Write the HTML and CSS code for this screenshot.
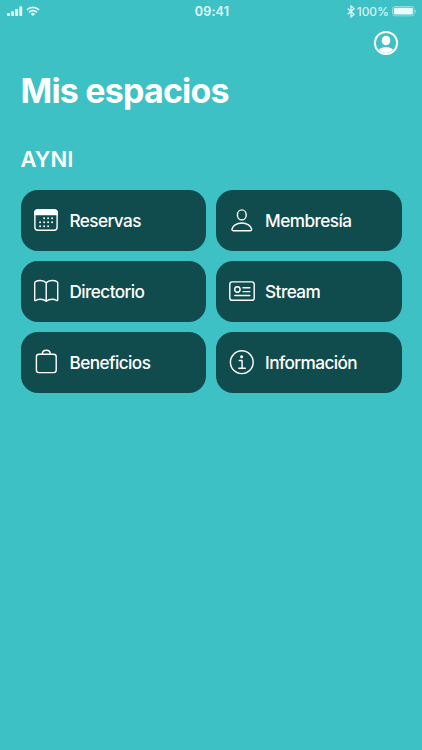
FILE: index.html
```html
<!DOCTYPE html>
<html lang="es">
<head>
    <meta charset="UTF-8">
    <meta name="viewport" content="width=device-width, initial-scale=1.0">
    <title>Mis espacios</title>
    <link rel="stylesheet" href="styles.css">
</head>
<body>
    <div class="status-bar">
        <div class="status-left">
            <svg class="signal" width="16" height="11" viewBox="0 0 16 11" fill="currentColor">
                <rect x="0" y="7" width="2.9" height="3" rx="0.7"/>
                <rect x="4.1" y="5.3" width="2.9" height="4.7" rx="0.7"/>
                <rect x="8.2" y="2.9" width="2.9" height="7.1" rx="0.7"/>
                <rect x="12.3" y="0.2" width="2.9" height="9.8" rx="0.7"/>
            </svg>
            <svg class="wifi" width="14" height="11" viewBox="0 0 14 11" fill="none" stroke="currentColor" stroke-width="1.7">
                <path d="M0.9 3.9a8.6 8.6 0 0 1 12.2 0"/>
                <path d="M3.1 6.3a5.5 5.5 0 0 1 7.8 0"/>
                <path d="M7 10.1L4.8 7.9a3.1 3.1 0 0 1 4.4 0z" fill="currentColor" stroke="none"/>
            </svg>
        </div>
        <div class="status-time">09:41</div>
        <div class="status-right">
            <svg class="bluetooth" width="8" height="13" viewBox="0 0 8 13" fill="none" stroke="currentColor" stroke-width="1.2">
                <path d="M0.7 3.5l6.4 5.7-3.1 2.8V0.9l3.1 2.8-6.4 5.6"/>
            </svg>
            <span class="battery-level">100%</span>
            <svg class="battery" width="25" height="11" viewBox="0 0 25 11">
                <rect x="0.5" y="0.5" width="21.6" height="9.4" rx="2.4" fill="none" stroke="currentColor" stroke-width="0.8" opacity="0.6"/>
                <rect x="1.8" y="1.8" width="19" height="6.8" rx="1.3" fill="currentColor"/>
                <path d="M23.1 3.5c1.2 0.5 1.2 2.9 0 3.4z" fill="currentColor" opacity="0.6"/>
            </svg>
        </div>
    </div>

    <header class="toolbar">
        <button class="profile-button" aria-label="Perfil">
            <svg width="26" height="26" viewBox="0 0 26 26">
                <defs>
                    <clipPath id="avatar-clip"><circle cx="13" cy="13" r="10"/></clipPath>
                </defs>
                <circle cx="13" cy="13" r="11.1" fill="none" stroke="currentColor" stroke-width="2"/>
                <g clip-path="url(#avatar-clip)" fill="currentColor">
                    <ellipse cx="13" cy="10.5" rx="4.3" ry="4.8"/>
                    <ellipse cx="13" cy="22.3" rx="8.2" ry="5.4"/>
                </g>
            </svg>
        </button>
    </header>

    <main class="content">
        <h1>Mis espacios</h1>
        <h2>AYNI</h2>
        <div class="spaces">
            <button class="space-card">
                <svg class="space-icon" viewBox="0 0 28 28">
                    <rect x="2.9" y="4" width="22.2" height="20.2" rx="3"/>
                    <path class="solid" d="M2.2 9.2V6.5A3.2 3.2 0 0 1 5.4 3.3h17.2a3.2 3.2 0 0 1 3.2 3.2v2.7z"/>
                    <path class="dots" d="M12.1 12.2h8.1M8.1 16.2h12.1M8.1 20.2h8.1"/>
                </svg>
                <span>Reservas</span>
            </button>
            <button class="space-card">
                <svg class="space-icon" viewBox="0 0 28 28">
                    <ellipse cx="13.8" cy="8.9" rx="4.4" ry="5"/>
                    <path d="M5.6 24.8C4.3 24.8 3.8 24.1 4 23c0.6-3.1 4.5-6 9.8-6s9.2 2.9 9.8 6c0.2 1.1-0.3 1.8-1.6 1.8z"/>
                </svg>
                <span>Membresía</span>
            </button>
            <button class="space-card">
                <svg class="space-icon" viewBox="0 0 28 28">
                    <path d="M14.2 5.8C12.9 4.3 10.9 3.5 8.4 3.5c-2.2 0-4 0.5-5.1 1.3-0.4 0.3-0.6 0.7-0.6 1.2v16.9c0 0.6 0.5 0.9 1 0.6 1.3-0.8 2.8-1.2 4.7-1.2 2.5 0 4.4 0.7 5.8 2 1.4-1.3 3.3-2 5.8-2 1.9 0 3.4 0.4 4.7 1.2 0.5 0.3 1 0 1-0.6V6c0-0.5-0.2-0.9-0.6-1.2-1.1-0.8-2.9-1.3-5.1-1.3-2.5 0-4.5 0.8-5.8 2.3zM14.2 5.8v18.5"/>
                </svg>
                <span>Directorio</span>
            </button>
            <button class="space-card">
                <svg class="space-icon" viewBox="0 0 28 28">
                    <rect x="1.8" y="4.9" width="24.4" height="18.4" rx="2.4"/>
                    <circle cx="9.4" cy="12.5" r="2.7"/>
                    <path d="M15 10.7h6.8M15 14.6h6.8M6.8 18.5h15"/>
                </svg>
                <span>Stream</span>
            </button>
            <button class="space-card">
                <svg class="space-icon" viewBox="0 0 28 28">
                    <rect x="4.4" y="6.2" width="19.8" height="18.4" rx="2.6"/>
                    <path d="M10.2 6c0.2-2.2 1.8-3.8 4.1-3.8s3.9 1.6 4.1 3.8"/>
                </svg>
                <span>Beneficios</span>
            </button>
            <button class="space-card">
                <svg class="space-icon" viewBox="0 0 28 28">
                    <circle cx="13.8" cy="14.2" r="11.4"/>
                    <circle class="solid" cx="13.6" cy="8.8" r="1.5"/>
                    <path d="M11.3 12.5h2.8v7.6M10.8 20.2h6.5"/>
                </svg>
                <span>Información</span>
            </button>
        </div>
    </main>
</body>
</html>
```

FILE: styles.css
```css
* {
    margin: 0;
    padding: 0;
    box-sizing: border-box;
}

:root {
    --bg: #3dc1c4;
    --card: #104c4e;
    --text: #ffffff;
}

body {
    font-family: Inter, "Liberation Sans", sans-serif;
    background: var(--bg);
    color: var(--text);
    min-height: 100vh;
}

svg {
    display: block;
}

.status-bar {
    display: grid;
    grid-template-columns: 1fr auto 1fr;
    align-items: center;
    height: 22px;
    padding: 0 5px 0 7px;
    color: #e9fafa;
}

.status-left,
.status-right {
    display: flex;
    align-items: center;
}

.status-left {
    gap: 3px;
}

.status-right {
    justify-content: flex-end;
}

.status-time {
    font-size: 12.5px;
    font-weight: 600;
    letter-spacing: 0.2px;
}

.battery-level {
    font-size: 12.2px;
    margin: 0 3px 0 2px;
}

.toolbar {
    display: flex;
    justify-content: flex-end;
    padding: 8px 23px 0;
}

button {
    border: none;
    background: none;
    color: inherit;
    font-family: inherit;
    cursor: pointer;
}

.content {
    padding: 14px 20.5px 0;
}

h1 {
    font-size: 34px;
    line-height: 42px;
    font-weight: 700;
    letter-spacing: -0.8px;
}

h2 {
    margin-top: 33px;
    font-size: 22px;
    line-height: 28px;
    font-weight: 600;
}

.spaces {
    display: grid;
    grid-template-columns: 1fr 1fr;
    gap: 10.2px;
    margin-top: 16.5px;
}

.space-card {
    display: flex;
    align-items: center;
    gap: 9.5px;
    height: 61px;
    padding: 0 11.5px;
    border-radius: 17px;
    background: var(--card);
    font-size: 17.2px;
    font-weight: 500;
    letter-spacing: -0.58px;
}

.space-card span {
    padding-top: 1px;
}

.space-icon {
    width: 28px;
    height: 28px;
    fill: none;
    stroke: currentColor;
    stroke-width: 1.4;
    stroke-linecap: round;
    stroke-linejoin: round;
}

.space-icon .solid {
    fill: currentColor;
    stroke: none;
}

.space-icon .dots {
    stroke-width: 1.9;
    stroke-dasharray: 0 4;
}
```
